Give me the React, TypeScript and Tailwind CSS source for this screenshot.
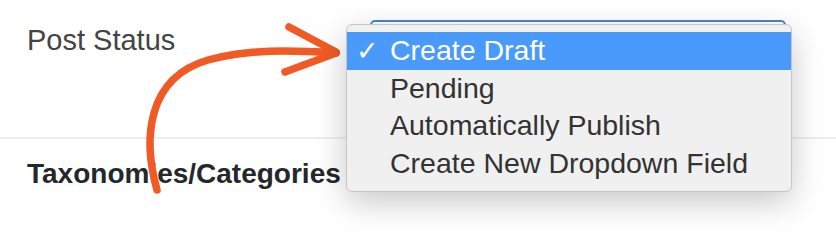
import React from 'react'

const options = ['Create Draft', 'Pending', 'Automatically Publish', 'Create New Dropdown Field']

export default function App() {
  const selected = 0

  return (
    <div className="relative w-[836px] h-[238px] overflow-hidden bg-white font-['Liberation_Sans',Arial,sans-serif]">
      <div className="flex h-[137px] items-start">
        <div className="pl-[27px] pt-[23px] text-[29px] leading-[34px] text-[#444]">Post Status</div>
        <div className="ml-[195px] mt-[20px] h-[40px] w-[416px] rounded-[5px] border-2 border-[#4b86c5] bg-white" />
      </div>
      <div className="h-[2px] bg-[#eeeeee]" />
      <div className="pl-[27px] pt-[18px] text-[28px] font-bold leading-[34px] text-[#23282d]">
        Taxonomies/Categories
      </div>

      {/* hand drawn arrow */}
      <svg className="pointer-events-none absolute left-0 top-0" width="836" height="238" viewBox="0 0 836 238">
        <g fill="none" stroke="#f15a24" strokeLinecap="round" strokeLinejoin="round">
          <path d="M157 190 C143 140 146 78 208 60 C248 49 290 50 336 53" strokeWidth="7.5" />
          <path d="M289 27 L336 52" strokeWidth="7.5" />
          <path d="M285 72 L336 53" strokeWidth="7.5" />
        </g>
      </svg>

      {/* open select menu */}
      <div className="absolute left-[346px] top-[24px] w-[446px] rounded-[6px] border border-[#c6c6c6] bg-[#f0f0f0] pt-[7px] pb-[9px] shadow-[0_10px_32px_rgba(0,0,0,0.22)]">
        {options.map((o, i) => (
          <div
            key={o}
            className={
              i === selected
                ? 'flex h-[37.5px] items-center bg-[#4a9afb] text-white'
                : 'flex h-[37.5px] items-center text-[#333]'
            }
          >
            <span className="w-[43px] pl-[9px] font-['DejaVu_Sans',sans-serif] text-[27px] leading-[37.5px]">
              {i === selected ? '✓' : ''}
            </span>
            <span className="text-[28.5px] leading-[37.5px]">{o}</span>
          </div>
        ))}
      </div>
    </div>
  )
}
